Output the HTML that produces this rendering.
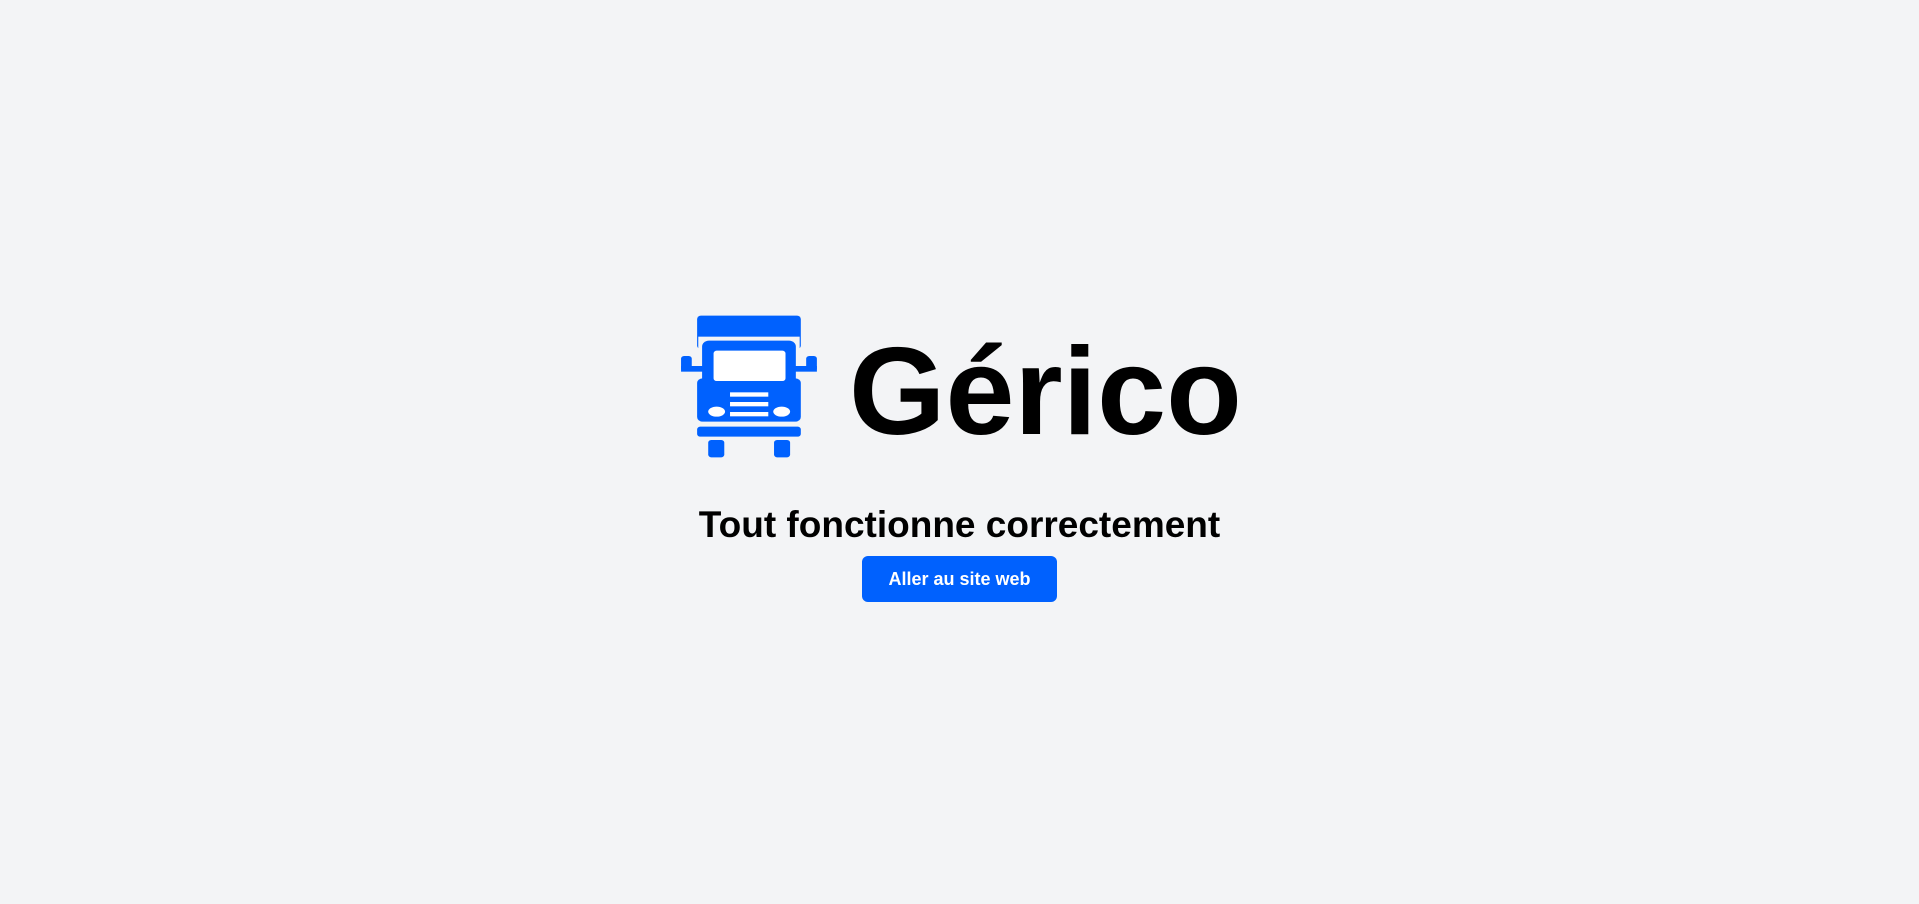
<!DOCTYPE html>
<html><head><meta charset="utf-8"><style>
html,body{margin:0;padding:0;background:#f3f4f6;width:1919px;height:904px;overflow:hidden;font-family:"Liberation Sans",sans-serif}
.t{position:absolute;white-space:nowrap;color:#000;font-weight:bold}
</style></head><body>
<svg style="position:absolute;left:660px;top:300px" width="600" height="310" viewBox="0 0 1568 930" preserveAspectRatio="none">
<g fill="#0061fe">
<rect x="97" y="47" width="271" height="100" rx="10"/>
<rect x="100" y="110" width="265" height="40" fill="#f3f4f6"/>
<rect x="110" y="122" width="245" height="150" rx="18"/>
<rect x="97" y="235" width="271" height="130" rx="14"/>
<rect x="55" y="168" width="28" height="46" rx="8"/>
<rect x="55" y="198" width="60" height="17"/>
<rect x="382" y="168" width="28" height="46" rx="8"/>
<rect x="350" y="198" width="60" height="17"/>
<rect x="97" y="380" width="271" height="30" rx="8"/>
<rect x="126" y="420" width="42" height="52" rx="8"/>
<rect x="298" y="420" width="42" height="52" rx="8"/>
</g>
<g fill="#fff">
<rect x="140" y="152" width="188" height="91" rx="8"/>
<rect x="183" y="277" width="100" height="13"/>
<rect x="183" y="306" width="100" height="13"/>
<rect x="183" y="336" width="100" height="13"/>
<ellipse cx="148" cy="335" rx="22" ry="15"/>
<ellipse cx="318" cy="335" rx="22" ry="15"/>
</g>
</svg>
<div class="t" style="left:849px;top:330px;font-size:124px;line-height:124px">Gérico</div>
<div class="t" style="left:0;width:1919px;text-align:center;top:506px;font-size:37px;line-height:37px">Tout fonctionne correctement</div>
<div style="position:absolute;left:862px;top:556px;width:195px;height:46px;background:#0061fe;border-radius:6px;color:#fff;font-weight:bold;font-size:18px;line-height:46px;text-align:center">Aller au site web</div>
</body></html>
